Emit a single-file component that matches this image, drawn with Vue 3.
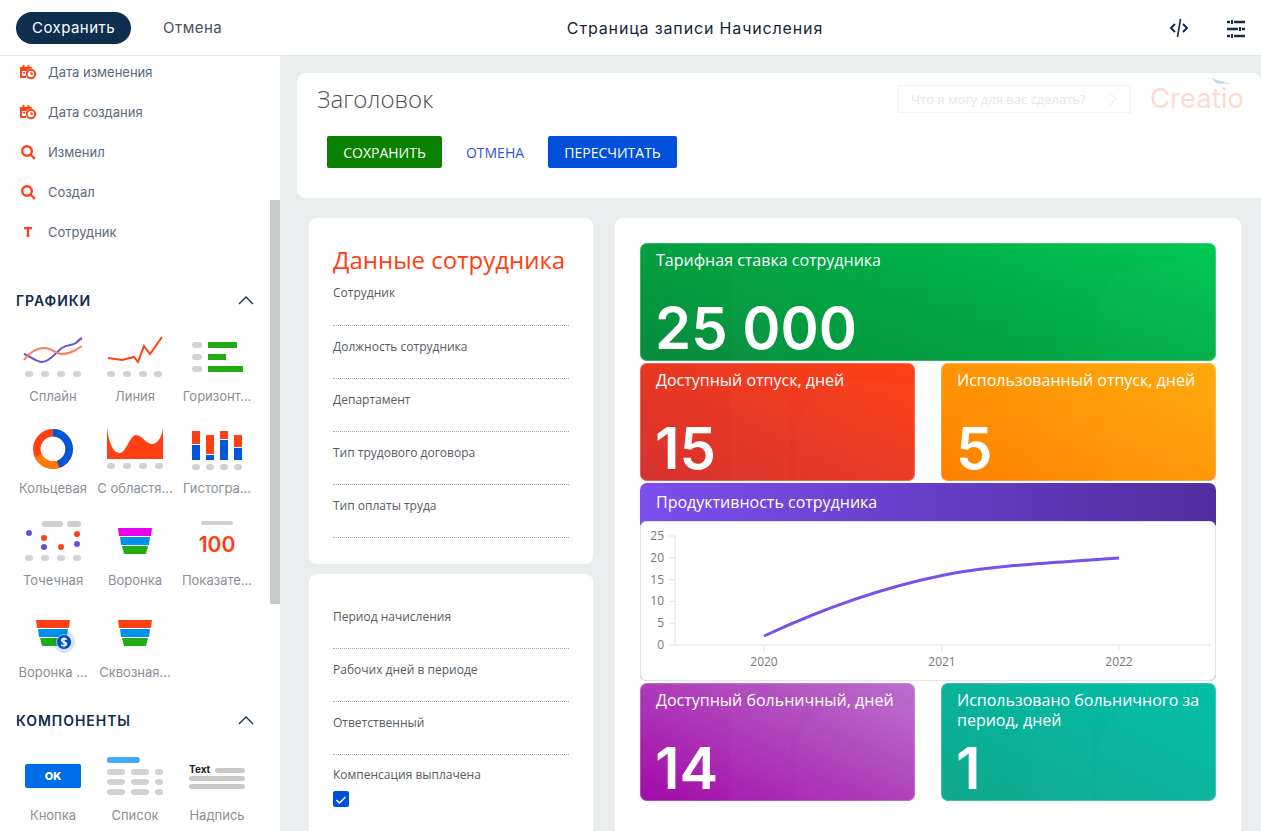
<template>
  <div class="page">
    <!-- Top bar -->
    <header class="topbar">
      <div class="topbar-left">
        <button class="btn-save">Сохранить</button>
        <button class="btn-cancel">Отмена</button>
      </div>
      <div class="topbar-title">Страница записи Начисления</div>
      <div class="topbar-right">
        <svg width="20" height="20" viewBox="0 0 20 20" fill="none" stroke="#0e2e50" stroke-width="2">
          <path d="M6 6 2 10l4 4M14 6l4 4-4 4" />
          <path d="M11.5 1 8.5 19" stroke-width="1.6" />
        </svg>
        <svg width="20" height="20" viewBox="0 0 20 20" fill="none" stroke="#0e2e50" stroke-width="2.6">
          <path d="M1 4h3M8 4h11M1 11h11M16 11h3M1 18h3M8 18h11" />
          <path d="M6 2v4M14 9v4M6 16v4" stroke-width="2" />
        </svg>
      </div>
    </header>

    <div class="body">
      <!-- Designer sidebar -->
      <aside class="sidebar">
        <div class="sidebar-inner">
          <div v-for="item in fieldItems" :key="item.label" class="field-item">
            <svg v-if="item.icon === 'date'" width="18" height="18" viewBox="0 0 18 18">
              <path d="M1 4h2.5V2h2v2h3V2h2v2H13v4h-10v5h4v2H1z" fill="#ff4013" />
              <path d="M4 9h2v1.6H4z" fill="#ff4013" />
              <circle cx="12" cy="11" r="5.6" fill="#fff" />
              <circle cx="12" cy="11" r="4.2" fill="none" stroke="#ff4013" stroke-width="2" />
              <path d="M12 9v2.2h2.2" fill="none" stroke="#ff4013" stroke-width="1.2" />
            </svg>
            <svg v-else-if="item.icon === 'search'" width="18" height="18" viewBox="0 0 18 18" fill="none" stroke="#ff4013">
              <circle cx="8" cy="8" r="4.8" stroke-width="2.4" />
              <path d="m11.5 11.5 4.5 4.5" stroke-width="2.4" />
            </svg>
            <svg v-else width="18" height="18" viewBox="0 0 18 18" fill="#ff4013">
              <path d="M5 4h8v2.2h-2.8V14H7.8V6.2H5z" />
            </svg>
            <span>{{ item.label }}</span>
          </div>

          <div class="section-head first">
            <span>ГРАФИКИ</span>
            <svg width="16" height="10" viewBox="0 0 16 10" fill="none" stroke="#0e2e50" stroke-width="1.3"><path d="m1 9 7-7 7 7" /></svg>
          </div>

          <div class="tool-grid">
            <div class="tool">
              <svg class="tool-icon" viewBox="12 330 82 58">
                <path d="M24 354C30 356 36 362 42 362 50 362 56 352 62 348 68 344 72 346 76 343 78 341 80 339 82 338" fill="none" stroke="#6a4fd8" stroke-width="2" />
                <path d="M24 360C30 352 36 348 44 348 52 348 56 354 62 354 70 354 76 350 82 346" fill="none" stroke="#ff7a55" stroke-width="2" />
                <rect v-for="x in [25, 41, 57, 73]" :key="x" :x="x" y="371" width="8" height="6" rx="3" fill="#d2d2d2" />
              </svg>
              <div class="tool-label">Сплайн</div>
            </div>
            <div class="tool">
              <svg class="tool-icon" viewBox="94 330 82 58">
                <path d="M108 358 122 360 134 357 138 362 144 346 150 354 162 337" fill="none" stroke="#ff4013" stroke-width="2" />
                <rect v-for="x in [107, 123, 139, 154]" :key="x" :x="x" y="371" width="8" height="6" rx="3" fill="#d2d2d2" />
              </svg>
              <div class="tool-label">Линия</div>
            </div>
            <div class="tool">
              <svg class="tool-icon" viewBox="176 330 82 58">
                <rect x="192" y="342" width="10" height="6" rx="3" fill="#d2d2d2" />
                <rect x="192" y="354" width="10" height="6" rx="3" fill="#d2d2d2" />
                <rect x="192" y="366" width="10" height="6" rx="3" fill="#d2d2d2" />
                <rect x="208" y="342" width="29" height="6" fill="#22ab14" />
                <rect x="208" y="354" width="18" height="6" fill="#22ab14" />
                <rect x="208" y="366" width="35" height="6" fill="#22ab14" />
              </svg>
              <div class="tool-label">Горизонт...</div>
            </div>

            <div class="tool">
              <svg class="tool-icon" viewBox="12 422 82 58">
                <g fill="none" stroke-width="7.5" transform="rotate(-90 53 449)">
                  <circle cx="53" cy="449" r="16.2" stroke="#ff4013" />
                  <circle cx="53" cy="449" r="16.2" stroke="#ff7a00" stroke-dasharray="23 79" stroke-dashoffset="-46" />
                  <circle cx="53" cy="449" r="16.2" stroke="#0058d6" stroke-dasharray="45 57" />
                </g>
              </svg>
              <div class="tool-label">Кольцевая</div>
            </div>
            <div class="tool">
              <svg class="tool-icon" viewBox="94 422 82 58">
                <path d="M107 428C110 450 116 453 120 453 126 453 130 435 136 435 142 435 146 444 152 444 158 444 162 436 163 428V459H107Z" fill="#ff4013" />
                <rect v-for="x in [107, 123, 139, 155]" :key="x" :x="x" y="463" width="8" height="6" rx="3" fill="#d2d2d2" />
              </svg>
              <div class="tool-label">С областя...</div>
            </div>
            <div class="tool">
              <svg class="tool-icon" viewBox="176 422 82 58">
                <g v-for="bar in stackedBars" :key="bar.x">
                  <rect :x="bar.x" :y="bar.top" width="8" :height="bar.split - bar.top" fill="#ff4013" />
                  <rect :x="bar.x" :y="bar.split + 1" width="8" :height="460 - bar.split - 1" fill="#0058d6" />
                  <rect :x="bar.x" y="464" width="8" height="6" rx="3" fill="#d2d2d2" />
                </g>
              </svg>
              <div class="tool-label">Гистогра...</div>
            </div>

            <div class="tool">
              <svg class="tool-icon" viewBox="12 514 82 58">
                <rect x="42" y="521" width="21" height="6" rx="3" fill="#cfcfcf" />
                <rect x="67" y="521" width="14" height="6" rx="3" fill="#cfcfcf" />
                <circle cx="29" cy="533" r="3" fill="#6a4fd8" />
                <circle cx="44" cy="538" r="3" fill="#ff4013" />
                <circle cx="44" cy="547" r="3" fill="#6a4fd8" />
                <circle cx="61" cy="547" r="3" fill="#ff4013" />
                <circle cx="77" cy="534" r="3" fill="#ff4013" />
                <circle cx="77" cy="544" r="3" fill="#6a4fd8" />
                <rect v-for="x in [25, 41, 57, 73]" :key="x" :x="x" y="555" width="8" height="6" rx="3" fill="#d2d2d2" />
              </svg>
              <div class="tool-label">Точечная</div>
            </div>
            <div class="tool">
              <svg class="tool-icon" viewBox="94 514 82 58">
                <path d="M118 528h34l-1 8h-32z" fill="#ea00ea" />
                <path d="M120 537h30l-1 8h-28z" fill="#0091ea" />
                <path d="M122 546h26l-2 8h-22z" fill="#22ab14" />
              </svg>
              <div class="tool-label">Воронка</div>
            </div>
            <div class="tool">
              <svg class="tool-icon" viewBox="176 514 82 58">
                <rect x="201" y="521" width="32" height="4" rx="2" fill="#cfcfcf" />
                <text x="217" y="552" text-anchor="middle" class="tool-number">100</text>
              </svg>
              <div class="tool-label">Показате...</div>
            </div>

            <div class="tool">
              <svg class="tool-icon" viewBox="12 606 82 58">
                <path d="M36 620h34l-1 8H37z" fill="#ff4013" />
                <path d="M38 629h30l-1 8H39z" fill="#0091ea" />
                <path d="M40 638h26l-2 8H42z" fill="#22ab14" />
                <circle cx="64" cy="642" r="11" fill="#0058d6" opacity=".15" />
                <circle cx="64" cy="642" r="7.5" fill="#0050c8" stroke="#fff" stroke-width=".6" />
                <text x="64" y="646.5" text-anchor="middle" class="tool-dollar">$</text>
              </svg>
              <div class="tool-label">Воронка ...</div>
            </div>
            <div class="tool">
              <svg class="tool-icon" viewBox="94 606 82 58">
                <path d="M118 620h34l-1 8h-32z" fill="#ff4013" />
                <path d="M120 629h30l-1 8h-28z" fill="#0091ea" />
                <path d="M122 638h26l-2 8h-22z" fill="#22ab14" />
              </svg>
              <div class="tool-label">Сквозная...</div>
            </div>
          </div>

          <div class="section-head second">
            <span>КОМПОНЕНТЫ</span>
            <svg width="16" height="10" viewBox="0 0 16 10" fill="none" stroke="#0e2e50" stroke-width="1.3"><path d="m1 9 7-7 7 7" /></svg>
          </div>

          <div class="tool-grid components">
            <div class="tool">
              <svg class="tool-icon" viewBox="12 749 82 58">
                <rect x="25" y="764" width="56" height="24" rx="2" fill="#006be6" />
                <text x="53" y="780" text-anchor="middle" class="tool-ok">OK</text>
              </svg>
              <div class="tool-label">Кнопка</div>
            </div>
            <div class="tool">
              <svg class="tool-icon" viewBox="94 749 82 58">
                <rect x="107" y="757" width="33" height="6" rx="3" fill="#42aaf0" />
                <g v-for="y in [769, 779, 789]" :key="y" fill="#d2d2d2">
                  <rect x="107" :y="y" width="18" height="6" rx="3" />
                  <rect x="131" :y="y" width="18" height="6" rx="3" />
                  <rect x="155" :y="y" width="8" height="6" rx="3" />
                </g>
              </svg>
              <div class="tool-label">Список</div>
            </div>
            <div class="tool">
              <svg class="tool-icon" viewBox="176 749 82 58">
                <text x="189" y="773" class="tool-text">Text</text>
                <rect x="215" y="768" width="30" height="5" rx="2.5" fill="#c8c8c8" />
                <rect x="189" y="776" width="56" height="5" rx="2.5" fill="#c8c8c8" />
                <rect x="189" y="784" width="56" height="5" rx="2.5" fill="#c8c8c8" />
              </svg>
              <div class="tool-label">Надпись</div>
            </div>
          </div>
        </div>
        <div class="scrollbar"></div>
      </aside>

      <!-- Page preview -->
      <main class="main">
        <section class="head-card">
          <div class="head-row">
            <h1>Заголовок</h1>
            <div class="ask-box">
              <span>Что я могу для вас сделать?</span>
              <svg width="10" height="16" viewBox="0 0 10 16" fill="none" stroke="#f0f2f2" stroke-width="1.2"><path d="m1 1 7 7-7 7" /></svg>
            </div>
            <div class="logo">
              <span>Creatio</span>
              <svg class="logo-arrow" width="22" height="10" viewBox="0 0 22 10"><path d="M1 0 21 6 7 5.5z" fill="#cfd6ea" /></svg>
            </div>
          </div>
          <div class="head-actions">
            <button class="action green">СОХРАНИТЬ</button>
            <button class="action link">ОТМЕНА</button>
            <button class="action blue">ПЕРЕСЧИТАТЬ</button>
          </div>
        </section>

        <div class="content">
          <div class="left-col">
            <section class="form-card top">
              <h2>Данные сотрудника</h2>
              <div v-for="label in employeeFields" :key="label" class="form-field">{{ label }}</div>
            </section>
            <section class="form-card bottom">
              <div v-for="label in payrollFields" :key="label" class="form-field">{{ label }}</div>
              <div class="form-label">Компенсация выплачена</div>
              <div class="checkbox">
                <svg width="16" height="16" viewBox="0 0 16 16" fill="none" stroke="#fff" stroke-width="1.5"><path d="m3.5 8 3 3 6-6" /></svg>
              </div>
            </section>
          </div>

          <section class="dash-card">
            <div class="tile green-tile wide">
              <div class="tile-deco"></div>
              <div class="tile-title">Тарифная ставка сотрудника</div>
              <div class="tile-value">25 000</div>
            </div>
            <div class="tile red-tile">
              <div class="tile-deco"></div>
              <div class="tile-title">Доступный отпуск, дней</div>
              <div class="tile-value">15</div>
            </div>
            <div class="tile orange-tile">
              <div class="tile-deco"></div>
              <div class="tile-title">Использованный отпуск, дней</div>
              <div class="tile-value">5</div>
            </div>
            <div class="chart-tile">
              <div class="chart-title">Продуктивность сотрудника</div>
              <div class="chart-body">
                <svg width="576" height="160" viewBox="640 521 576 160">
                  <path d="M675 536V645H1210" fill="none" stroke="#e2e2e6" />
                  <g v-for="t in yTicks" :key="t.label">
                    <path :d="`M669 ${t.y}h6`" stroke="#e2e2e6" />
                    <text x="664" :y="t.y + 4" text-anchor="end" class="axis">{{ t.label }}</text>
                  </g>
                  <g v-for="t in xTicks" :key="t.label">
                    <path :d="`M${t.x} 645v6`" stroke="#e2e2e6" />
                    <text :x="t.x" y="666" text-anchor="middle" class="axis">{{ t.label }}</text>
                  </g>
                  <path d="M764 636C820 610 880 588 942 575.5 985 566 1050 563 1119 558" fill="none" stroke="#7a50ec" stroke-width="3" />
                </svg>
              </div>
            </div>
            <div class="tile purple-tile">
              <div class="tile-deco"></div>
              <div class="tile-title">Доступный больничный, дней</div>
              <div class="tile-value">14</div>
            </div>
            <div class="tile teal-tile">
              <div class="tile-deco"></div>
              <div class="tile-title">Использовано больничного за период, дней</div>
              <div class="tile-value">1</div>
            </div>
          </section>
        </div>
      </main>
    </div>
  </div>
</template>

<script setup>
const fieldItems = [
  { label: 'Дата изменения', icon: 'date' },
  { label: 'Дата создания', icon: 'date' },
  { label: 'Изменил', icon: 'search' },
  { label: 'Создал', icon: 'search' },
  { label: 'Сотрудник', icon: 'text' }
]

const stackedBars = [
  { x: 192, top: 431, split: 444 },
  { x: 206, top: 435, split: 454 },
  { x: 220, top: 431, split: 439 },
  { x: 234, top: 435, split: 447 }
]

const employeeFields = [
  'Сотрудник',
  'Должность сотрудника',
  'Департамент',
  'Тип трудового договора',
  'Тип оплаты труда'
]
const payrollFields = ['Период начисления', 'Рабочих дней в периоде', 'Ответственный']

const yTicks = [0, 5, 10, 15, 20, 25].map((v) => ({ label: v, y: 645 - v * 4.36 }))
const xTicks = [
  { label: '2020', x: 764 },
  { label: '2021', x: 942 },
  { label: '2022', x: 1119 }
]
</script>

<style>
html,
body {
  margin: 0;
  overflow: hidden;
}
</style>

<style scoped>
.page {
  width: 1261px;
  height: 831px;
  overflow: hidden;
  display: flex;
  flex-direction: column;
  font-family: "Open Sans", sans-serif;
  background: #e9eded;
}

/* Top bar */
.topbar {
  height: 56px;
  box-sizing: border-box;
  flex: none;
  display: flex;
  align-items: center;
  background: #fff;
  border-bottom: 1px solid #e2e2e2;
}
.topbar-left {
  width: 240px;
  display: flex;
  align-items: center;
  padding-left: 16px;
  box-sizing: border-box;
}
.btn-save {
  width: 115px;
  height: 32px;
  border: 0;
  border-radius: 16px;
  background: #0e2e50;
  color: #fff;
  font: 400 15px Inter, sans-serif;
  letter-spacing: 0.45px;
}
.btn-cancel {
  margin-left: 32px;
  padding: 0;
  border: 0;
  background: none;
  color: #44505e;
  font: 400 15px Inter, sans-serif;
  letter-spacing: 0.5px;
}
.topbar-title {
  flex: 1;
  text-align: center;
  font: 400 16px Inter, sans-serif;
  letter-spacing: 0.85px;
  color: #14263c;
}
.topbar-right {
  width: 111px;
  display: flex;
  align-items: center;
  gap: 37px;
  padding-left: 19px;
  box-sizing: border-box;
}

.body {
  flex: 1;
  display: flex;
  min-height: 0;
}

/* Sidebar */
.sidebar {
  position: relative;
  width: 280px;
  flex: none;
  background: #fff;
  overflow: hidden;
}
.sidebar-inner {
  margin-top: -4px;
}
.field-item {
  height: 40px;
  display: flex;
  align-items: center;
  gap: 11px;
  padding-left: 19px;
  font: 400 13px Inter, sans-serif;
  color: #5a687a;
}
.section-head {
  height: 24px;
  display: flex;
  align-items: center;
  justify-content: space-between;
  padding: 0 26px 0 16px;
  font: 600 14px Inter, sans-serif;
  letter-spacing: 0.95px;
  color: #0e2e50;
}
.section-head.first {
  margin-top: 36px;
  margin-bottom: 18px;
}
.section-head.second {
  margin-top: 10px;
}
.tool-grid {
  display: grid;
  grid-template-columns: repeat(3, 82px);
  grid-auto-rows: 92px;
  padding-left: 12px;
}
.tool-grid.components {
  margin-top: 17px;
}
.tool-icon {
  display: block;
  width: 82px;
  height: 58px;
}
.tool-label {
  height: 16px;
  text-align: center;
  white-space: nowrap;
  font: 400 13px/16px Inter, sans-serif;
  color: #8a8f96;
}
.tool-number {
  font: 600 21px Inter, sans-serif;
  fill: #ff4013;
}
.tool-dollar {
  font: 700 12px "Open Sans", sans-serif;
  fill: #fff;
}
.tool-ok {
  font: 800 11px Inter, sans-serif;
  fill: #fff;
}
.tool-text {
  font: 700 10px Inter, sans-serif;
  fill: #222;
}
.scrollbar {
  position: absolute;
  top: 144px;
  right: 0;
  width: 10px;
  height: 404px;
  background: #c9c9c9;
}

/* Main */
.main {
  flex: 1;
  min-width: 0;
  padding: 17px 0 0 17px;
}
.head-card {
  height: 125px;
  box-sizing: border-box;
  padding: 9px 18px 0 20px;
  background: #fff;
  border-radius: 8px 8px 0 8px;
  box-shadow: 0 0 1px #d9dcdc;
}
.head-row {
  height: 32px;
  display: flex;
  align-items: center;
}
.head-row h1 {
  flex: 1;
  margin: 0;
  font: 300 24px "Open Sans", sans-serif;
  color: #4b4f55;
}
.ask-box {
  width: 233px;
  height: 28px;
  box-sizing: border-box;
  margin-top: 1px;
  display: flex;
  align-items: center;
  justify-content: space-between;
  padding: 0 12px;
  border: 1px solid #f1f3f3;
  font-size: 13px;
  color: #e6e8e8;
}
.logo {
  position: relative;
  margin-left: 19px;
  width: 93px;
  font: 400 27.5px Inter, sans-serif;
  color: #ffd9d0;
  line-height: 32px;
}
.logo-arrow {
  position: absolute;
  top: -4px;
  left: 60px;
}
.head-actions {
  display: flex;
  margin: 22px 0 0 10px;
}
.action {
  height: 32px;
  border: 0;
  border-radius: 2px;
  padding: 0;
  font: 500 14px "Open Sans", sans-serif;
  color: #fff;
}
.action.green {
  width: 115px;
  background: #0a8200;
}
.action.link {
  width: 106px;
  background: none;
  color: #2f55d4;
}
.action.blue {
  width: 129px;
  background: #0050dc;
}

.content {
  display: flex;
  gap: 22px;
  margin: 20px 0 0 12px;
}
.left-col {
  width: 284px;
  flex: none;
  display: flex;
  flex-direction: column;
  gap: 10px;
}
.form-card {
  background: #fff;
  border-radius: 8px;
  padding: 0 24px;
}
.form-card.top {
  height: 346px;
  box-sizing: border-box;
  padding-top: 25px;
}
.form-card.top h2 {
  margin: 0 0 7px;
  font: 400 24px/34px "Open Sans", sans-serif;
  color: #ff4013;
}
.form-card.bottom {
  height: 290px;
  box-sizing: border-box;
  padding-top: 34px;
}
.form-field,
.form-label {
  font-size: 12px;
  line-height: 18px;
  color: #555b62;
}
.form-field {
  height: 42px;
  box-sizing: border-box;
  border-bottom: 1px dotted #a9a9a9;
}
.form-card.bottom .form-field:first-child {
  height: 41px;
}
.form-field + .form-field {
  height: 53px;
  padding-top: 12px;
}
.form-card.bottom .form-label {
  padding-top: 11px;
}
.checkbox {
  width: 16px;
  height: 16px;
  margin-top: 7px;
  border-radius: 2px;
  background: #0050dc;
}

/* Dashboard */
.dash-card {
  width: 626px;
  height: 640px;
  flex: none;
  box-sizing: border-box;
  padding: 25px;
  background: #fff;
  border-radius: 8px;
  display: grid;
  grid-template-columns: 275px 275px;
  grid-template-rows: 118px 118px 198px 118px;
  justify-content: space-between;
  row-gap: 2px;
}
.tile {
  position: relative;
  box-sizing: border-box;
  padding: 7px 16px 0;
  border-radius: 7px;
  color: #fff;
  box-shadow: inset 0 0 0 1px rgba(235, 235, 235, 0.25);
}
.tile-deco {
  position: absolute;
  inset: 0;
  overflow: hidden;
  border-radius: 7px;
}
.tile-deco::before {
  content: "";
  position: absolute;
  right: -30px;
  bottom: -50px;
  width: 150px;
  height: 150px;
  border-radius: 40%;
  background: rgba(255, 255, 255, 0.02);
}
.tile-deco::after {
  content: "";
  position: absolute;
  left: 90px;
  top: 30px;
  width: 60px;
  height: 110px;
  background: rgba(255, 255, 255, 0.015);
}
.tile.wide {
  grid-column: 1 / 3;
}
.tile-title {
  position: relative;
  font-size: 16px;
  line-height: 20px;
}
.tile-value {
  position: absolute;
  left: 15px;
  bottom: 8px;
  font: 600 58px/50px Inter, sans-serif;
  white-space: pre;
}
.green-tile {
  background: linear-gradient(20deg, #088a3c, #00ab45 55%, #00c853);
}
.red-tile {
  background: linear-gradient(25deg, #d53131, #ff4013);
}
.orange-tile {
  background: linear-gradient(25deg, #ff8000, #ffab0a);
}
.purple-tile {
  background: linear-gradient(25deg, #a20aa8, #ba70cc);
}
.teal-tile {
  background: linear-gradient(25deg, #10a88f, #00bfa5);
}
.chart-tile {
  grid-column: 1 / 3;
  position: relative;
  overflow: hidden;
  border-radius: 7px;
  background: linear-gradient(90deg, #7c4fee, #512da0);
  padding-top: 38px;
  box-sizing: border-box;
}
.chart-title {
  position: absolute;
  top: 9px;
  left: 16px;
  font-size: 16px;
  line-height: 20px;
  color: #fff;
}
.chart-body {
  height: 160px;
  box-sizing: border-box;
  background: #fff;
  border-radius: 7px;
  box-shadow: inset 0 0 0 1px #e4e4e6;
}
.chart-body svg {
  display: block;
}
.axis {
  font: 400 12px "Open Sans", sans-serif;
  fill: #777;
}
</style>
